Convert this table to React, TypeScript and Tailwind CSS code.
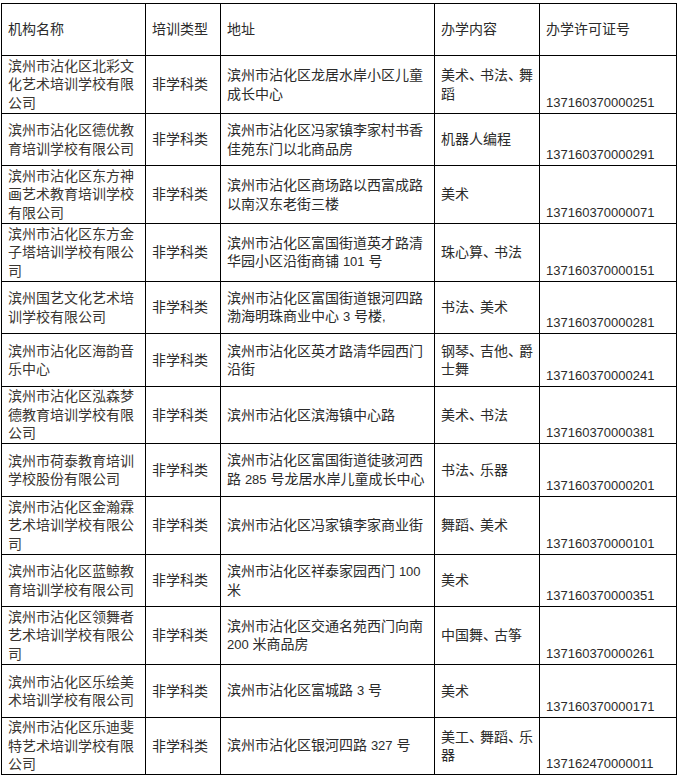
type Row = {
  h: string;
  name: string[];
  addr: string[];
  content: string[];
  license: string;
};

const cols = "grid grid-cols-[144px_75px_214px_105px_137px]";

const rows: Row[] = [
  {
    h: "h-[58px]",
    name: ["滨州市沾化区北彩文", "化艺术培训学校有限", "公司"],
    addr: ["滨州市沾化区龙居水岸小区儿童", "成长中心"],
    content: ["美术、书法、舞", "蹈"],
    license: "137160370000251",
  },
  {
    h: "h-[52px]",
    name: ["滨州市沾化区德优教", "育培训学校有限公司"],
    addr: ["滨州市沾化区冯家镇李家村书香", "佳苑东门以北商品房"],
    content: ["机器人编程"],
    license: "137160370000291",
  },
  {
    h: "h-[58px]",
    name: ["滨州市沾化区东方神", "画艺术教育培训学校", "有限公司"],
    addr: ["滨州市沾化区商场路以西富成路", "以南汉东老街三楼"],
    content: ["美术"],
    license: "137160370000071",
  },
  {
    h: "h-[58px]",
    name: ["滨州市沾化区东方金", "子塔培训学校有限公", "司"],
    addr: ["滨州市沾化区富国街道英才路清", "华园小区沿街商铺 101 号"],
    content: ["珠心算、书法"],
    license: "137160370000151",
  },
  {
    h: "h-[52px]",
    name: ["滨州国艺文化艺术培", "训学校有限公司"],
    addr: ["滨州市沾化区富国街道银河四路", "渤海明珠商业中心 3 号楼,"],
    content: ["书法、美术"],
    license: "137160370000281",
  },
  {
    h: "h-[53px]",
    name: ["滨州市沾化区海韵音", "乐中心"],
    addr: ["滨州市沾化区英才路清华园西门", "沿街"],
    content: ["钢琴、吉他、爵", "士舞"],
    license: "137160370000241",
  },
  {
    h: "h-[57px]",
    name: ["滨州市沾化区泓森梦", "德教育培训学校有限", "公司"],
    addr: ["滨州市沾化区滨海镇中心路"],
    content: ["美术、书法"],
    license: "137160370000381",
  },
  {
    h: "h-[53px]",
    name: ["滨州市荷泰教育培训", "学校股份有限公司"],
    addr: ["滨州市沾化区富国街道徒骇河西", "路 285 号龙居水岸儿童成长中心"],
    content: ["书法、乐器"],
    license: "137160370000201",
  },
  {
    h: "h-[58px]",
    name: ["滨州市沾化区金瀚霖", "艺术培训学校有限公", "司"],
    addr: ["滨州市沾化区冯家镇李家商业街"],
    content: ["舞蹈、美术"],
    license: "137160370000101",
  },
  {
    h: "h-[52px]",
    name: ["滨州市沾化区蓝鲸教", "育培训学校有限公司"],
    addr: ["滨州市沾化区祥泰家园西门 100", "米"],
    content: ["美术"],
    license: "137160370000351",
  },
  {
    h: "h-[58px]",
    name: ["滨州市沾化区领舞者", "艺术培训学校有限公", "司"],
    addr: ["滨州市沾化区交通名苑西门向南", "200 米商品房"],
    content: ["中国舞、古筝"],
    license: "137160370000261",
  },
  {
    h: "h-[53px]",
    name: ["滨州市沾化区乐绘美", "术培训学校有限公司"],
    addr: ["滨州市沾化区富城路 3 号"],
    content: ["美术"],
    license: "137160370000171",
  },
  {
    h: "h-[57px]",
    name: ["滨州市沾化区乐迪斐", "特艺术培训学校有限", "公司"],
    addr: ["滨州市沾化区银河四路 327 号"],
    content: ["美工、舞蹈、乐", "器"],
    license: "137162470000011",
  },
];

// digits / latin are set in Arial-width at 13px, CJK stays 14px,
// the enumeration comma is squeezed a little like the source
const Txt = ({ text }: { text: string }) => (
  <>
    {text.split(/([0-9A-Za-z,.]+|、)/).map((part, i) =>
      part === "、" ? (
        <span key={i} className="tracking-[-3px]">
          {part}
        </span>
      ) : /^[0-9A-Za-z,.]+$/.test(part) ? (
        <span key={i} className="text-[13px]">
          {part}
        </span>
      ) : (
        <span key={i}>{part}</span>
      )
    )}
  </>
);

const Lines = ({ lines }: { lines: string[] }) => (
  <div>
    {lines.map((l, i) => (
      <div key={i} className="whitespace-nowrap">
        <Txt text={l} />
      </div>
    ))}
  </div>
);

const cell =
  "flex items-center border-r border-b border-black pl-[6px] overflow-hidden";

const App = () => {
  return (
    <div className="min-h-[777px] bg-white pt-[3px] pl-[1px] font-['Liberation_Sans','Noto_Sans_CJK_SC',sans-serif] text-[14px] leading-[18.4px] text-[#2b2b2b]">
      <div className="w-[676px] border-l border-t border-black">
        <div className={`${cols} h-[52px]`}>
          <div className={cell}>机构名称</div>
          <div className={cell}>培训类型</div>
          <div className={cell}>地址</div>
          <div className={cell}>办学内容</div>
          <div className={cell}>办学许可证号</div>
        </div>

        {rows.map((r) => (
          <div key={r.license} className={`${cols} ${r.h}`}>
            <div className={`${cell} text-[#3a3632]`}>
              <Lines lines={r.name} />
            </div>
            <div className={cell}>非学科类</div>
            <div className={cell}>
              <Lines lines={r.addr} />
            </div>
            <div className={cell}>
              <Lines lines={r.content} />
            </div>
            <div className="flex items-end border-r border-b border-black pl-[6px] pb-[1px]">
              <span className="text-[13px]">{r.license}</span>
            </div>
          </div>
        ))}
      </div>
    </div>
  );
};

export default App;
